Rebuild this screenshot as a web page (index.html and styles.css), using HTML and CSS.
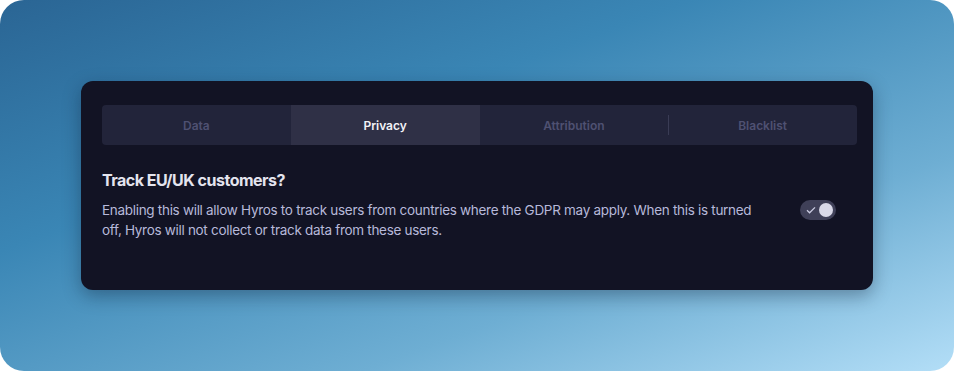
FILE: index.html
```html
<!DOCTYPE html>
<html lang="en">
  <head>
    <meta charset="UTF-8" />
    <meta name="viewport" content="width=device-width, initial-scale=1.0" />
    <title>Settings - Privacy</title>
    <link rel="stylesheet" href="styles.css">
  </head>
  <body>
    <div class="frame">
      <div class="card">
        <div class="tabs">
          <div class="tab">Data</div>
          <div class="tab active">Privacy</div>
          <div class="tab">Attribution</div>
          <div class="tab divided">Blacklist</div>
        </div>

        <div class="setting">
          <h3>Track EU/UK customers?</h3>
          <div class="setting-row">
            <p>
              Enabling this will allow Hyros to track users from countries where
              the GDPR may apply. When this is turned off, Hyros will not collect
              or track data from these users.
            </p>
            <div class="toggle">
              <svg width="12" height="12" viewBox="0 0 12 12">
                <path d="M2 6.3 L4.6 8.8 L10 3.4" fill="none" stroke="#c9cae0" stroke-width="1.3" />
              </svg>
              <span class="knob"></span>
            </div>
          </div>
        </div>
      </div>
    </div>
  </body>
</html>
```

FILE: styles.css
```css
body {
  margin: 0;
  background: #ffffff;
  font-family: "Inter", "Liberation Sans", sans-serif;
}
.frame {
  width: 954px;
  height: 371px;
  box-sizing: border-box;
  padding: 81px 81px 0 81px;
  border-radius: 24px;
  background: linear-gradient(160deg, #2a6594 0%, #3a86b5 35%, #6eaed3 70%, #b3def7 100%);
}
.card {
  height: 209px;
  box-sizing: border-box;
  padding: 24px 16px 0 21px;
  background: #121324;
  border-radius: 12px;
  box-shadow: 0 6px 18px rgba(10, 20, 40, 0.35);
}
.tabs {
  display: grid;
  grid-template-columns: repeat(4, 1fr);
  height: 40px;
  background: #22243a;
  border-radius: 4px;
  overflow: hidden;
}
.tab {
  display: flex;
  align-items: center;
  justify-content: center;
  font-size: 12px;
  font-weight: 600;
  color: #4f5172;
}
.tab.active {
  background: #2f3046;
  color: #f2f2f7;
}
.tab.divided {
  position: relative;
}
.tab.divided::before {
  content: "";
  position: absolute;
  left: 0;
  top: 10px;
  bottom: 10px;
  width: 1px;
  background: #3a3c55;
}
.setting {
  padding-top: 25px;
}
.setting h3 {
  margin: 0;
  font-size: 16px;
  line-height: 20px;
  font-weight: 700;
  color: #e4e4ee;
  letter-spacing: -0.5px;
}
.setting-row {
  display: flex;
  align-items: flex-start;
  margin-top: 10px;
}
.setting-row p {
  margin: 0;
  width: 672px;
  font-size: 13.5px;
  line-height: 20px;
  color: #b7b9da;
  letter-spacing: -0.3px;
}
.toggle {
  margin-left: 26px;
  display: flex;
  align-items: center;
  justify-content: space-between;
  width: 36px;
  height: 20px;
  box-sizing: border-box;
  padding: 0 3px 0 5px;
  border-radius: 10px;
  background: #3f4058;
}
.knob {
  width: 14px;
  height: 14px;
  border-radius: 50%;
  background: #d9d9e8;
}
```
